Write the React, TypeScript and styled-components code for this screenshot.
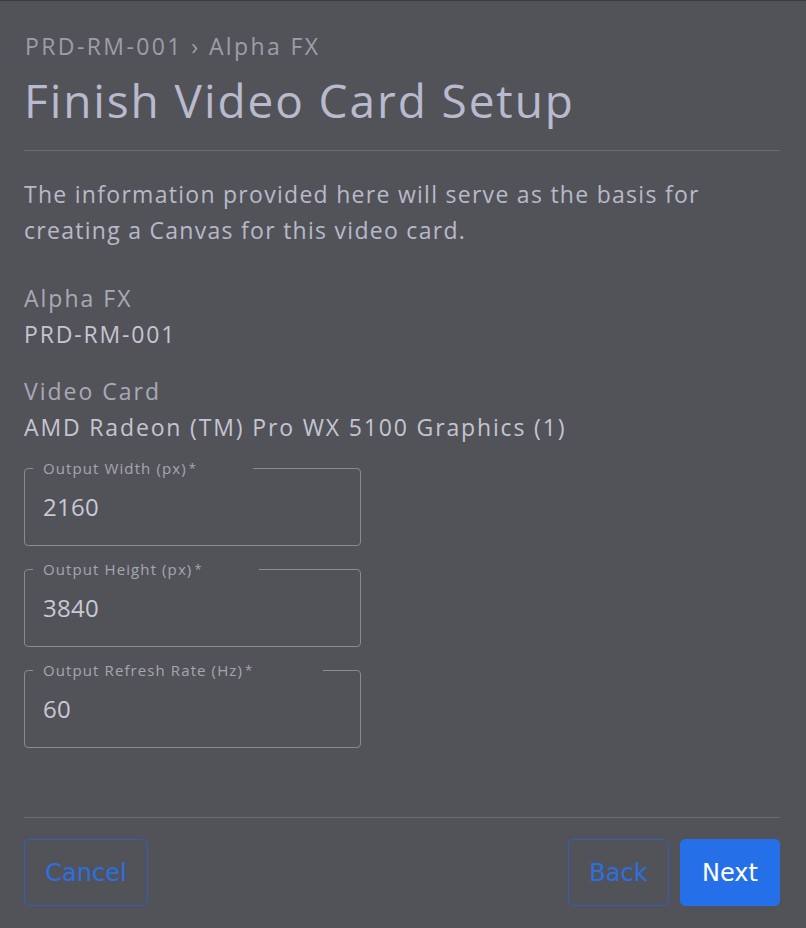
import React from "react";
import styled, { createGlobalStyle } from "styled-components";

const Global = createGlobalStyle`
  html, body { margin: 0; padding: 0; background: #525359; }
  * { box-sizing: border-box; }
`;

const Page = styled.div`
  min-height: 928px;
  background: #525359;
  border-top: 1px solid #3a3b3f;
  padding: 29px 26px 22px 24px;
  font-family: "Open Sans", sans-serif;
  color: #b9b9c9;
  display: flex;
  flex-direction: column;
`;

const Breadcrumb = styled.div`
  font-size: 23px;
  line-height: 32px;
  letter-spacing: 2.4px;
  color: #9d9dab;
  padding-left: 1px;
`;

const Title = styled.h1`
  margin: 10px 0 0;
  font-weight: 400;
  font-size: 46px;
  line-height: 56px;
  letter-spacing: 1.9px;
  color: #babace;
  padding-bottom: 22px;
  border-bottom: 1px solid #6b6c72;
`;

const Intro = styled.p`
  margin: 25px 0 0;
  font-size: 23px;
  line-height: 36px;
  letter-spacing: 1.28px;
  color: #b9b9c9;
`;

const InfoBlock = styled.div<{ $mt: number }>`
  margin-top: ${(p) => p.$mt}px;
  display: flex;
  flex-direction: column;
`;

const InfoLabel = styled.div`
  font-size: 23px;
  line-height: 36px;
  letter-spacing: 2px;
  color: #a9a9b5;
`;

const InfoValue = styled.div`
  font-size: 23px;
  line-height: 36px;
  letter-spacing: 1.85px;
  color: #c5c5d2;
`;

const Fields = styled.div`
  margin-top: 15px;
  display: flex;
  flex-direction: column;
  gap: 15px;
`;

const Field = styled.fieldset`
  margin: 0;
  width: 337px;
  height: 86px;
  border: 1px solid #8a8b92;
  border-radius: 4px;
  padding: 0 18px 0 8px;
  display: flex;
  flex-direction: column;
`;

const Legend = styled.legend<{ $pr: number }>`
  margin-left: 0;
  padding: 0 ${(p) => p.$pr}px 0 10px;
  font-size: 15px;
  line-height: 16px;
  letter-spacing: 1.1px;
  color: #a6a6b2;
`;

const Star = styled.span`
  font-size: 13px;
  vertical-align: top;
  margin-left: 2px;
`;

const Value = styled.div`
  margin-top: 16px;
  padding-left: 10px;
  font-size: 24px;
  line-height: 30px;
  letter-spacing: 0.3px;
  color: #c8c8d6;
`;

const Spacer = styled.div`
  flex: 1;
`;

const Footer = styled.div`
  border-top: 1px solid #6b6c72;
  padding-top: 21px;
  display: flex;
  align-items: center;
  gap: 11px;
`;

const Button = styled.button<{ $primary?: boolean; $w: number }>`
  height: 67px;
  width: ${(p) => p.$w}px;
  border-radius: 5px;
  font-family: "DejaVu Sans", sans-serif;
  font-size: 24px;
  cursor: pointer;
  border: 1px solid ${(p) => (p.$primary ? "#2570e8" : "#2f5fb8")};
  background: ${(p) => (p.$primary ? "#2570e8" : "transparent")};
  color: ${(p) => (p.$primary ? "#ffffff" : "#2b6fe0")};
`;

const fields = [
  { label: "Output Width (px)", value: "2160", pr: 56 },
  { label: "Output Height (px)", value: "3840", pr: 56 },
  { label: "Output Refresh Rate (Hz)", value: "60", pr: 70 },
];

export default function App() {
  return (
    <>
      <Global />
      <Page>
        <Breadcrumb>PRD-RM-001 › Alpha FX</Breadcrumb>
        <Title>Finish Video Card Setup</Title>
        <Intro>
          The information provided here will serve as the basis for
          <br />
          creating a Canvas for this video card.
        </Intro>
        <InfoBlock $mt={32}>
          <InfoLabel>Alpha FX</InfoLabel>
          <InfoValue>PRD-RM-001</InfoValue>
        </InfoBlock>
        <InfoBlock $mt={21}>
          <InfoLabel>Video Card</InfoLabel>
          <InfoValue>AMD Radeon (TM) Pro WX 5100 Graphics (1)</InfoValue>
        </InfoBlock>
        <Fields>
          {fields.map((f) => (
            <Field key={f.label}>
              <Legend $pr={f.pr}>
                {f.label}
                <Star>*</Star>
              </Legend>
              <Value>{f.value}</Value>
            </Field>
          ))}
        </Fields>
        <Spacer />
        <Footer>
          <Button $w={124}>Cancel</Button>
          <Spacer />
          <Button $w={101}>Back</Button>
          <Button $primary $w={100}>Next</Button>
        </Footer>
      </Page>
    </>
  );
}
